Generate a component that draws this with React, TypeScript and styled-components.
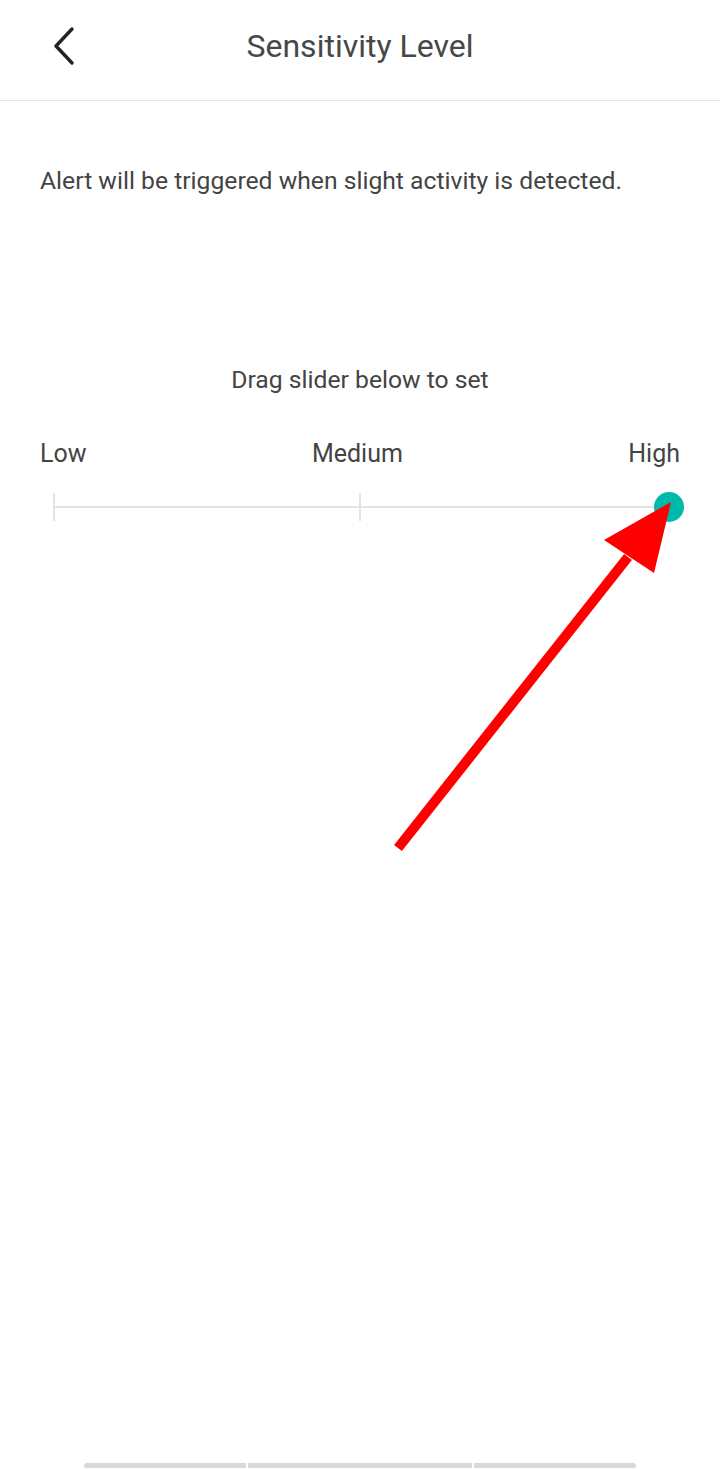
import React from "react";
import styled, { createGlobalStyle } from "styled-components";

const Global = createGlobalStyle`
  html, body { margin: 0; padding: 0; background: #fff; }
  body { font-family: Roboto, "Noto Sans", sans-serif; }
  * { box-sizing: border-box; }
`;

const Page = styled.div`
  position: relative;
  width: 720px;
  height: 1469px;
  background: #fff;
  display: flex;
  flex-direction: column;
  overflow: hidden;
`;

const Header = styled.header`
  height: 101px;
  padding-bottom: 9px;
  border-bottom: 1px solid #e6e6e6;
  display: grid;
  grid-template-columns: 100px 1fr 100px;
  align-items: center;
`;

const BackButton = styled.button`
  background: none;
  border: 0;
  padding: 0 0 0 48px;
  height: 100%;
  display: flex;
  align-items: center;
  cursor: pointer;
`;

const Title = styled.h1`
  margin: 0;
  text-align: center;
  font-weight: 400;
  font-size: 32px;
  color: #474747;
`;

const Description = styled.p`
  margin: 64px 40px 0;
  font-size: 24.7px;
  line-height: 32px;
  color: #444;
`;

const Hint = styled.div`
  margin-top: 168px;
  text-align: center;
  font-size: 24.7px;
  line-height: 30px;
  color: #444;
`;

const Labels = styled.div`
  margin: 44px 40px 0;
  display: flex;
  justify-content: space-between;
  font-size: 25px;
  line-height: 30px;
  color: #444;
`;

const Track = styled.div`
  position: relative;
  margin: 23px 55px 0 53px;
  height: 30px;
  display: flex;
  align-items: center;
`;

const Line = styled.div`
  flex: 1;
  height: 2px;
  background: #e3e3e3;
`;

const Tick = styled.div<{ $left: number }>`
  position: absolute;
  left: ${(p) => p.$left}%;
  top: 1px;
  width: 2px;
  height: 28px;
  background: #e3e3e3;
`;

const Thumb = styled.div`
  position: absolute;
  right: -19px;
  top: 0;
  width: 30px;
  height: 30px;
  border-radius: 50%;
  background: #00b9aa;
`;

const Overlay = styled.svg`
  position: absolute;
  left: 0;
  top: 0;
  pointer-events: none;
`;

const BottomBar = styled.div`
  position: absolute;
  left: 84px;
  bottom: 1px;
  width: 552px;
  height: 5px;
  display: grid;
  grid-template-columns: 162px 224px 162px;
  column-gap: 2px;
`;

const Segment = styled.div<{ $edge?: "l" | "r" }>`
  background: #d9d9d9;
  border-radius: ${(p) =>
    p.$edge === "l" ? "3px 0 0 3px" : p.$edge === "r" ? "0 3px 3px 0" : "0"};
`;

export default function App() {
  return (
    <>
      <Global />
      <Page>
        <Header>
          <BackButton aria-label="Back">
            <svg width="30" height="42" viewBox="0 0 30 42">
              <path
                d="M24 4 L8 21 L24 38"
                fill="none"
                stroke="#222"
                strokeWidth="3.4"
                strokeLinecap="round"
                strokeLinejoin="round"
              />
            </svg>
          </BackButton>
          <Title>Sensitivity Level</Title>
          <div />
        </Header>
        <Description>
          Alert will be triggered when slight activity is detected.
        </Description>
        <Hint>Drag slider below to set</Hint>
        <Labels>
          <span>Low</span>
          <span>Medium</span>
          <span>High</span>
        </Labels>
        <Track>
          <Tick $left={0} />
          <Tick $left={50} />
          <Line />
          <Thumb />
        </Track>
        <Overlay width="720" height="1469" viewBox="0 0 720 1469">
          <line
            x1="398"
            y1="848"
            x2="628"
            y2="557"
            stroke="#ff0000"
            strokeWidth="10"
          />
          <polygon points="671,502 604,540 654,573" fill="#ff0000" />
        </Overlay>
        <BottomBar>
          <Segment $edge="l" />
          <Segment />
          <Segment $edge="r" />
        </BottomBar>
      </Page>
    </>
  );
}
